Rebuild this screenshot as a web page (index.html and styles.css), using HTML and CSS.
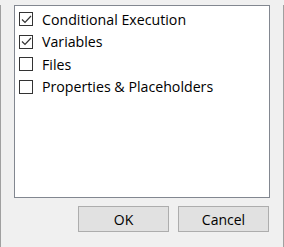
FILE: index.html
```html
<!DOCTYPE html>
<html lang="en">

<head>
    <meta charset="UTF-8">
    <title>Options</title>
    <link rel="stylesheet" href="styles.css">
</head>

<body>
    <div class="window">
        <!-- Lista de opciones -->
        <div class="list">
            <label class="item">
                <span class="box checked">
                    <svg width="11" height="11" viewBox="0 0 11 11"><path d="M1 5.5 L4 8.5 L10 2" /></svg>
                </span>
                Conditional Execution
            </label>
            <label class="item">
                <span class="box checked">
                    <svg width="11" height="11" viewBox="0 0 11 11"><path d="M1 5.5 L4 8.5 L10 2" /></svg>
                </span>
                Variables
            </label>
            <label class="item">
                <span class="box"></span>
                Files
            </label>
            <label class="item">
                <span class="box"></span>
                Properties &amp; Placeholders
            </label>
        </div>

        <div class="buttons">
            <button>OK</button>
            <button>Cancel</button>
        </div>
    </div>
</body>

</html>
```

FILE: styles.css
```css
body {
    margin: 0;
    font-family: "Open Sans", "Noto Sans", sans-serif;
    background-color: #f0f0f0;
}

.window {
    width: 282px;
    height: 246px;
    border: 1px solid #a0a0a0;
    border-top: none;
    background-color: #f0f0f0;
}

.list {
    margin: 5px 13px 0 13px;
    height: 189px;
    background: white;
    border: 1px solid #828790;
    padding-top: 2px;
    box-sizing: content-box;
}

.item {
    display: flex;
    align-items: center;
    height: 22.5px;
    padding-left: 4px;
    font-size: 14.2px;
    color: #000;
}

.box {
    width: 12px;
    height: 12px;
    border: 1px solid #333;
    margin-right: 9px;
    display: flex;
    align-items: center;
    justify-content: center;
    background: white;
}

.box svg path {
    fill: none;
    stroke: #333;
    stroke-width: 1.2;
}

.buttons {
    display: flex;
    justify-content: flex-end;
    gap: 9px;
    margin-top: 8px;
    padding-right: 14px;
}

button {
    width: 91px;
    height: 26px;
    background-color: #e1e1e1;
    border: 1px solid #adadad;
    font-family: "Open Sans", "Noto Sans", sans-serif;
    font-size: 14px;
    color: #000;
    padding: 0;
}
```
